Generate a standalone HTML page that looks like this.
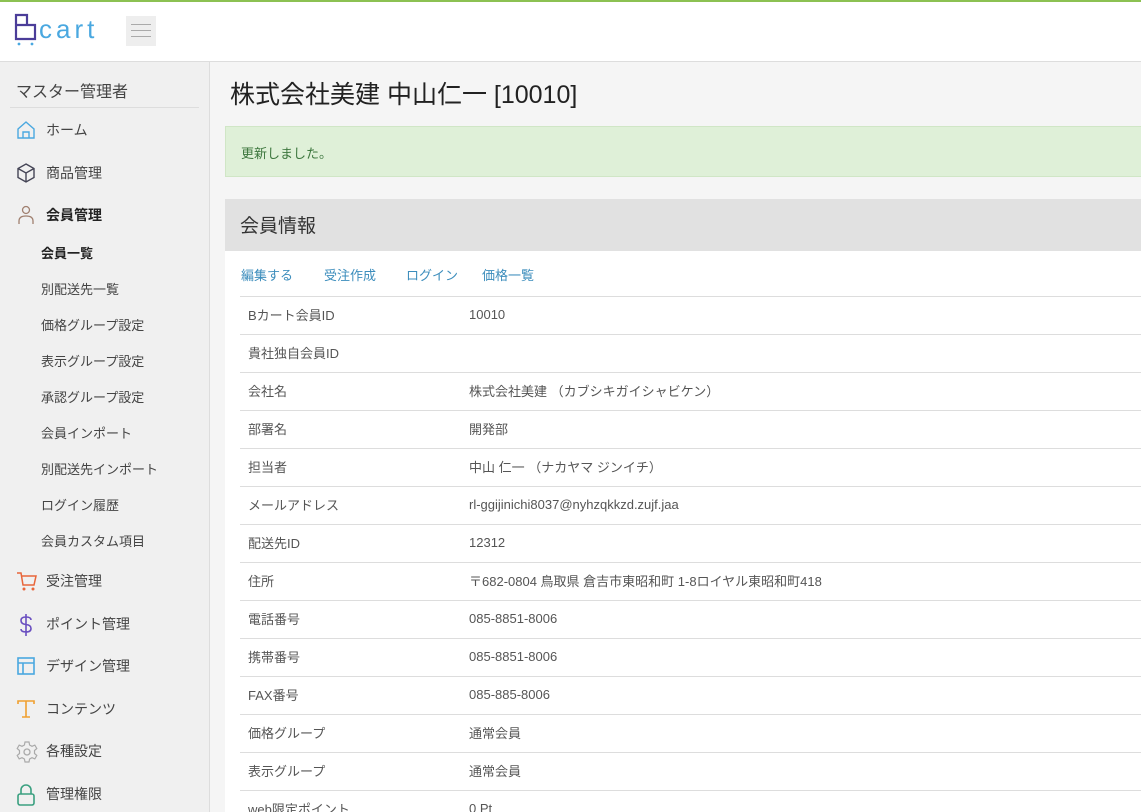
<!DOCTYPE html>
<html><head><meta charset="utf-8"><style>
*{margin:0;padding:0;box-sizing:border-box}
html,body{width:1141px;height:812px;overflow:hidden}
body{background:#f5f5f5;font-family:"Liberation Sans","Noto Sans CJK JP",sans-serif;color:#333;position:relative}
.top{position:absolute;left:0;top:0;width:1141px;height:2px;background:#8cc152}
.hdr{position:absolute;left:0;top:2px;width:1141px;height:60px;background:#fff;border-bottom:1px solid #ddd}
.side{position:absolute;left:0;top:62px;width:210px;height:750px;background:#f0f0f0;border-right:1px solid #ddd}
.side .t{position:absolute;left:16px;top:16px;font-size:16px;color:#444}
.side .ln{position:absolute;left:10px;top:45px;width:189px;height:1px;background:#ddd}
.it{position:absolute;left:16px;font-size:14px;color:#444;height:24px;line-height:24px}
.it svg{position:absolute;left:0;top:2px}
.it span{position:absolute;left:30px;white-space:nowrap}
.sub{position:absolute;left:41px;font-size:13px;color:#444;white-space:nowrap}
.main{position:absolute;left:210px;top:62px;width:931px;height:750px;overflow:hidden}
h1{position:absolute;left:20px;top:13px;font-size:25px;font-weight:normal;color:#222;white-space:nowrap}
.alert{position:absolute;left:15px;top:64px;width:930px;height:51px;background:#dff0d8;border:1px solid #d0e6c6;font-size:13px;color:#3c763d;padding:16px 15px}
.ch{position:absolute;left:15px;top:137px;width:930px;height:52px;background:#e1e1e1;font-size:19px;color:#333;padding:12px 15px}
.card{position:absolute;left:15px;top:189px;width:930px;height:600px;background:#fff}
.lk{position:absolute;top:14px;font-size:13px;color:#3c8dbc}
table{position:absolute;left:15px;top:45px;width:915px;border-collapse:collapse;font-size:13px;color:#555}
td{height:38px;border-top:1px solid #ddd;padding-left:8px;vertical-align:middle;padding-bottom:2px}
td:first-child{width:221px}
</style></head><body>
<div class="top"></div>
<div class="hdr">
<svg width="100" height="46" style="position:absolute;left:14px;top:10px" viewBox="0 0 100 46">
<path d="M2 3h11v10H2zM2 13h19v14H2z" fill="none" stroke="#4b3d99" stroke-width="2.2"/>
<circle cx="5" cy="32" r="1.4" fill="#4aa8e0"/><circle cx="18" cy="32" r="1.4" fill="#4aa8e0"/>
<text x="25" y="26" font-family="Liberation Sans,sans-serif" font-size="26" fill="#4aa8e0" letter-spacing="4">cart</text>
</svg>
<div style="position:absolute;left:126px;top:14px;width:30px;height:30px;background:#eee"><div style="position:absolute;left:5px;top:8px;width:20px;height:1px;background:#aaa;box-shadow:0 6px 0 #aaa,0 12px 0 #aaa"></div></div>
</div>
<div class="side">
<div class="t">マスター管理者</div><div class="ln"></div>
<div class="it" style="top:56px"><svg width="20" height="20" viewBox="0 0 20 20"><path d="M2 9L10 2l8 7v9H2zM7 18v-6h6v6" fill="none" stroke="#4aa8e0" stroke-width="1.4"/></svg><span>ホーム</span></div>
<div class="it" style="top:99px"><svg width="20" height="20" viewBox="0 0 20 20"><path d="M10 1l8 4.5v9L10 19l-8-4.5v-9zM2 5.5l8 4.5 8-4.5M10 10v9" fill="none" stroke="#445" stroke-width="1.4"/></svg><span>商品管理</span></div>
<div class="it" style="top:141px;font-weight:bold;color:#222"><svg width="20" height="20" viewBox="0 0 20 20"><circle cx="10" cy="5" r="3.5" fill="none" stroke="#a08070" stroke-width="1.3"/><path d="M3 19v-3q0-5 7-5t7 5v3" fill="none" stroke="#a08070" stroke-width="1.3"/></svg><span>会員管理</span></div>
<div class="sub" style="top:181px;font-weight:bold;color:#222">会員一覧</div>
<div class="sub" style="top:217px">別配送先一覧</div>
<div class="sub" style="top:253px">価格グループ設定</div>
<div class="sub" style="top:289px">表示グループ設定</div>
<div class="sub" style="top:325px">承認グループ設定</div>
<div class="sub" style="top:361px">会員インポート</div>
<div class="sub" style="top:397px">別配送先インポート</div>
<div class="sub" style="top:433px">ログイン履歴</div>
<div class="sub" style="top:469px">会員カスタム項目</div>
<div class="it" style="top:507px"><svg width="22" height="22" viewBox="0 0 22 22"><path d="M1 2h4l2 12h11l2-9H6" fill="none" stroke="#e8663a" stroke-width="1.5"/><circle cx="8" cy="18" r="1.5" fill="#e8663a"/><circle cx="17" cy="18" r="1.5" fill="#e8663a"/></svg><span>受注管理</span></div>
<div class="it" style="top:550px"><svg width="20" height="22" viewBox="0 0 20 22"><path d="M15 6q0-3-5-3t-5 3.5 5 4 5 4-5 3.5-5-3M10 0v22" fill="none" stroke="#6a4fc0" stroke-width="1.6"/></svg><span>ポイント管理</span></div>
<div class="it" style="top:592px"><svg width="20" height="20" viewBox="0 0 20 20"><rect x="2" y="2" width="16" height="16" fill="none" stroke="#4aa8e0" stroke-width="1.6"/><path d="M2 7h16M7 7v11" stroke="#4aa8e0" stroke-width="1.6"/></svg><span>デザイン管理</span></div>
<div class="it" style="top:635px"><svg width="20" height="20" viewBox="0 0 20 20"><path d="M2 5V2h16v3M10 2v16M6 18h8" fill="none" stroke="#f0a030" stroke-width="1.6"/></svg><span>コンテンツ</span></div>
<div class="it" style="top:677px"><svg width="22" height="22" viewBox="0 0 22 22"><circle cx="11" cy="11" r="3" fill="none" stroke="#aaa" stroke-width="1.3"/><path d="M9 1h4l.6 3 2.4 1.3 2.8-1.2 2 3.4-2.3 2v3l2.3 2-2 3.4-2.8-1.2L13.6 18 13 21H9l-.6-3L6 16.7l-2.8 1.2-2-3.4 2.3-2v-3l-2.3-2 2-3.4L6 5.3 8.4 4z" fill="none" stroke="#aaa" stroke-width="1.2"/></svg><span>各種設定</span></div>
<div class="it" style="top:720px"><svg width="20" height="22" viewBox="0 0 20 22"><rect x="2" y="10" width="16" height="11" rx="2" fill="none" stroke="#3aa080" stroke-width="1.6"/><path d="M5 10V6a5 5 0 0110 0v4" fill="none" stroke="#3aa080" stroke-width="1.6"/></svg><span>管理権限</span></div>
</div>
<div class="main">
<h1>株式会社美建 中山仁一 [10010]</h1>
<div class="alert">更新しました。</div>
<div class="ch">会員情報</div>
<div class="card">
<span class="lk" style="left:16px">編集する</span><span class="lk" style="left:99px">受注作成</span><span class="lk" style="left:181px">ログイン</span><span class="lk" style="left:257px">価格一覧</span>
<table>
<tr><td>Bカート会員ID</td><td>10010</td></tr>
<tr><td>貴社独自会員ID</td><td></td></tr>
<tr><td>会社名</td><td>株式会社美建 （カブシキガイシャビケン）</td></tr>
<tr><td>部署名</td><td>開発部</td></tr>
<tr><td>担当者</td><td>中山 仁一 （ナカヤマ ジンイチ）</td></tr>
<tr><td>メールアドレス</td><td>rl-ggijinichi8037@nyhzqkkzd.zujf.jaa</td></tr>
<tr><td>配送先ID</td><td>12312</td></tr>
<tr><td>住所</td><td>〒682-0804 鳥取県 倉吉市東昭和町 1-8ロイヤル東昭和町418</td></tr>
<tr><td>電話番号</td><td>085-8851-8006</td></tr>
<tr><td>携帯番号</td><td>085-8851-8006</td></tr>
<tr><td>FAX番号</td><td>085-885-8006</td></tr>
<tr><td>価格グループ</td><td>通常会員</td></tr>
<tr><td>表示グループ</td><td>通常会員</td></tr>
<tr><td>web限定ポイント</td><td>0 Pt</td></tr>
</table>
</div>
</div>
</body></html>
